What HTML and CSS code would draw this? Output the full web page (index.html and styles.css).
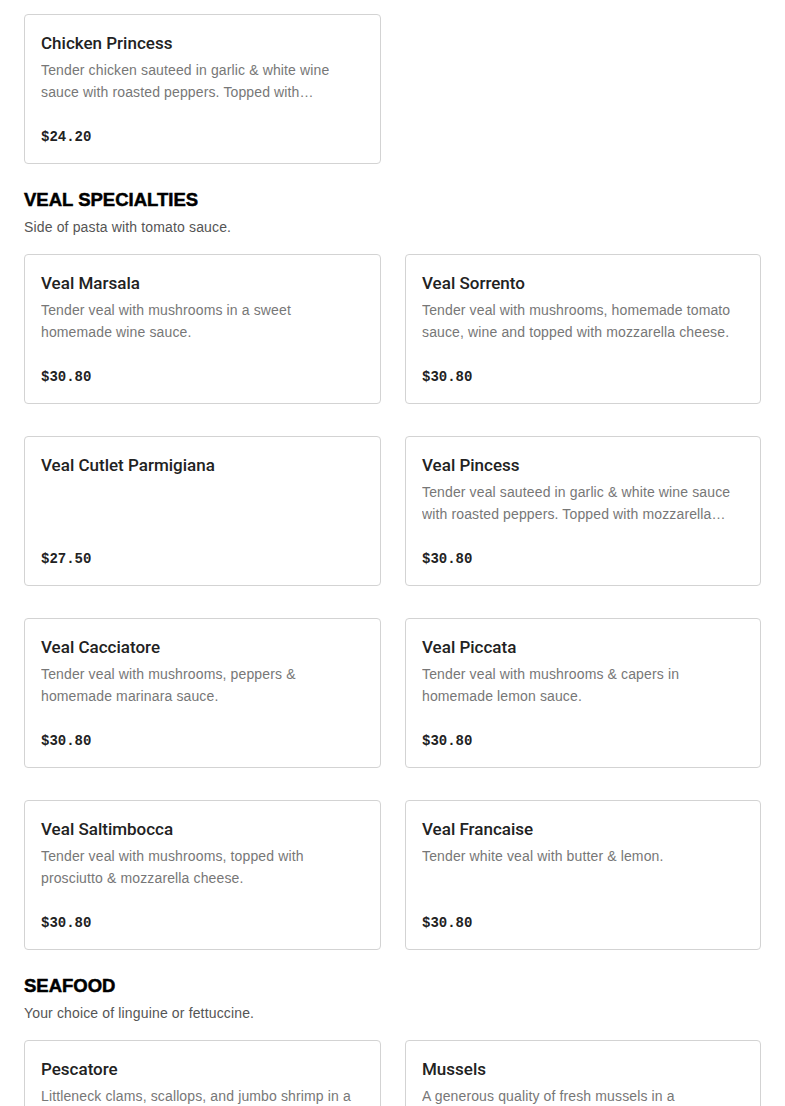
FILE: index.html
```html
<!DOCTYPE html>
<html>
<head>
<meta charset="utf-8">
<link rel="stylesheet" href="styles.css">
</head>
<body>
<main class="menu">
  <section class="section first">
    <div class="grid">
      <article class="card">
        <h3 class="name">Chicken Princess</h3>
        <p class="desc">Tender chicken sauteed in garlic &amp; white wine sauce with roasted peppers. Topped with mozzarella cheese.</p>
        <div class="price">$24.20</div>
      </article>
    </div>
  </section>

  <section class="section">
    <h2 class="title">VEAL SPECIALTIES</h2>
    <p class="subtitle">Side of pasta with tomato sauce.</p>
    <div class="grid">
      <article class="card">
        <h3 class="name">Veal Marsala</h3>
        <p class="desc">Tender veal with mushrooms in a sweet homemade wine sauce.</p>
        <div class="price">$30.80</div>
      </article>
      <article class="card">
        <h3 class="name">Veal Sorrento</h3>
        <p class="desc">Tender veal with mushrooms, homemade tomato sauce, wine and topped with mozzarella cheese.</p>
        <div class="price">$30.80</div>
      </article>
      <article class="card">
        <h3 class="name">Veal Cutlet Parmigiana</h3>
        <div class="price">$27.50</div>
      </article>
      <article class="card">
        <h3 class="name">Veal Pincess</h3>
        <p class="desc">Tender veal sauteed in garlic &amp; white wine sauce with roasted peppers. Topped with mozzarella cheese.</p>
        <div class="price">$30.80</div>
      </article>
      <article class="card">
        <h3 class="name">Veal Cacciatore</h3>
        <p class="desc">Tender veal with mushrooms, peppers &amp; homemade marinara sauce.</p>
        <div class="price">$30.80</div>
      </article>
      <article class="card">
        <h3 class="name">Veal Piccata</h3>
        <p class="desc">Tender veal with mushrooms &amp; capers in homemade lemon sauce.</p>
        <div class="price">$30.80</div>
      </article>
      <article class="card">
        <h3 class="name">Veal Saltimbocca</h3>
        <p class="desc">Tender veal with mushrooms, topped with prosciutto &amp; mozzarella cheese.</p>
        <div class="price">$30.80</div>
      </article>
      <article class="card">
        <h3 class="name">Veal Francaise</h3>
        <p class="desc">Tender white veal with butter &amp; lemon.</p>
        <div class="price">$30.80</div>
      </article>
    </div>
  </section>

  <section class="section">
    <h2 class="title">SEAFOOD</h2>
    <p class="subtitle">Your choice of linguine or fettuccine.</p>
    <div class="grid">
      <article class="card">
        <h3 class="name">Pescatore</h3>
        <p class="desc">Littleneck clams, scallops, and jumbo shrimp in a white or red sauce.</p>
        <div class="price">$36.30</div>
      </article>
      <article class="card">
        <h3 class="name">Mussels</h3>
        <p class="desc">A generous quality of fresh mussels in a homemade marinara or white wine sauce.</p>
        <div class="price">$27.50</div>
      </article>
    </div>
  </section>
</main>
</body>
</html>
```

FILE: styles.css
```css
* { box-sizing: border-box; }
html, body { margin: 0; padding: 0; background: #fff; }
body {
  font-family: "Liberation Sans", Arial, sans-serif;
  color: #222;
  overflow: hidden;
}
.menu {
  padding: 14px 24px 0 24px;
}
.title {
  margin: 24px 0 0 0;
  font-size: 18.5px;
  line-height: 24px;
  font-weight: 900;
  color: #000;
  letter-spacing: 0;
  -webkit-text-stroke: 0.5px #000;
}
.subtitle {
  margin: 4px 0 16px 0;
  font-size: 14px;
  line-height: 22px;
  letter-spacing: 0.15px;
  color: #555;
}
.grid {
  display: grid;
  grid-template-columns: 357px 356px;
  column-gap: 24px;
  row-gap: 32px;
}
.card {
  height: 150px;
  border: 1px solid #d3d3d3;
  border-radius: 4px;
  padding: 16px 16px 15px 16px;
  display: flex;
  flex-direction: column;
}
.name {
  margin: 0;
  font-family: Roboto, "Liberation Sans", Arial, sans-serif;
  font-size: 17px;
  line-height: 24px;
  font-weight: 500;
  color: #222;
}
.desc {
  margin: 4px 0 0 0;
  font-size: 14px;
  line-height: 22px;
  letter-spacing: 0.13px;
  color: #777;
  display: -webkit-box;
  -webkit-line-clamp: 2;
  -webkit-box-orient: vertical;
  overflow: hidden;
}
.price {
  margin-top: auto;
  font-family: "Liberation Mono", "Courier New", monospace;
  font-weight: 700;
  font-size: 14px;
  line-height: 22px;
  color: #222;
}
```
